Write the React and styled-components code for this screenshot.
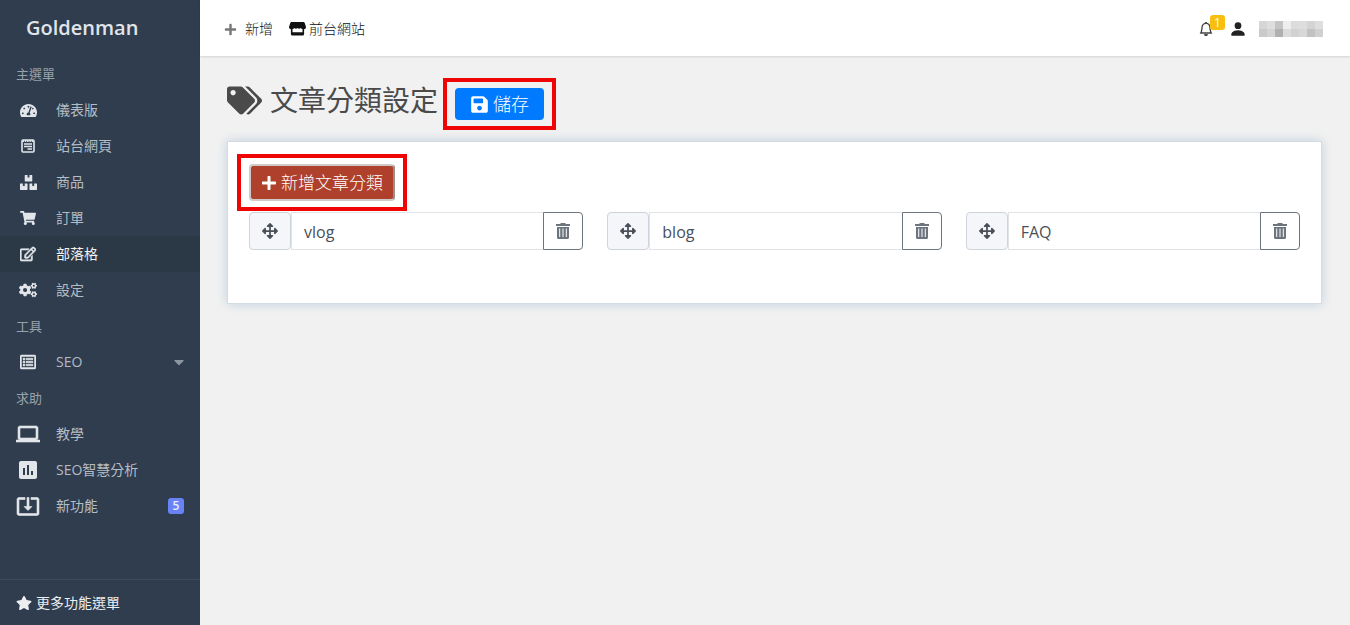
import React, { useState } from 'react';
import styled, { createGlobalStyle } from 'styled-components';
import {
  FaTachometerAlt,
  FaBoxes,
  FaShoppingCart,
  FaRegEdit,
  FaCogs,
  FaRegListAlt,
  FaStar,
  FaTags,
  FaSave,
  FaPlus,
  FaArrowsAlt,
  FaCaretDown,
} from 'react-icons/fa';
import { MdLaptop, MdAssessment, MdSystemUpdateAlt } from 'react-icons/md';
import { BsBell, BsPersonFill } from 'react-icons/bs';

const PageIcon = ({ size }) => (
  <svg width={size} height={size} viewBox='0 0 16 16' fill='none' stroke='currentColor'>
    <rect x='2' y='2' width='12' height='12' rx='1' strokeWidth='1.6' />
    <path d='M2.5 3h11' strokeWidth='2' strokeDasharray='1.5 .8' />
    <path d='M4 6h8M4 8.500h8M7.500 11h4.500' strokeWidth='1.3' />
  </svg>
);

const ShopIcon = () => (
  <svg width='17' height='16' viewBox='0 0 17 16' fill='currentColor'>
    <path d='M3 1h11c1 0 1.500.4 1.800 1.200L17 6c0 1.300-.8 2.200-1.900 2.300V13a1.500 1.500 0 0 1-1.500 1.500H3.400A1.500 1.500 0 0 1 1.900 13V8.300C.8 8.200 0 7.300 0 6l1.200-3.800C1.500 1.400 2 1 3 1zM3.500 8v3.300h10V8c-.8 0-1.400-.3-1.800-.9-.8 1-2.400 1-3.200 0-.8 1-2.400 1-3.200 0-.4.6-1 .9-1.800.9z' />
  </svg>
);

const TrashIcon = () => (
  <svg width='16' height='18' viewBox='0 0 16 18' fill='currentColor'>
    <path d='M1 2h4L6 1h4l1 1h4v2H1z' />
    <path
      fillRule='evenodd'
      d='M2 5h12v10.500a1.500 1.500 0 0 1-1.500 1.500h-9A1.500 1.500 0 0 1 2 15.500zM4.200 6.500v8.500h1V6.500zM7.500 6.500v8.500h1V6.500zM10.800 6.500v8.500h1V6.500z'
    />
  </svg>
);

const menu = [
  {
    title: '主選單',
    items: [
      { label: '儀表版', icon: FaTachometerAlt, size: 17 },
      { label: '站台網頁', icon: PageIcon, size: 16 },
      { label: '商品', icon: FaBoxes, size: 17 },
      { label: '訂單', icon: FaShoppingCart, size: 16 },
      { label: '部落格', icon: FaRegEdit, size: 16, active: true, bold: 20 },
      { label: '設定', icon: FaCogs, size: 18 },
    ],
  },
  {
    title: '工具',
    items: [{ label: 'SEO', icon: FaRegListAlt, size: 16, caret: true, bold: 16 }],
  },
  {
    title: '求助',
    items: [
      { label: '教學', icon: MdLaptop, size: 24, bold: 0.6 },
      { label: 'SEO智慧分析', icon: MdAssessment, size: 24 },
      { label: '新功能', icon: MdSystemUpdateAlt, size: 24, badge: 5, bold: 0.6 },
    ],
  },
];

const maskCells = [
  '#d6d6d6', '#dedede', '#c4c4c4', '#eeeeee', '#dcdcdc', '#dddddd', '#d4d4d4', '#dedede',
  '#cacaca', '#d4d4d4', '#b0b0b0', '#dcdcdc', '#d2d2d2', '#d8d8d8', '#c2c2c2', '#d0d0d0',
];

function Sidebar() {
  return (
    <Aside>
      <Brand href='#'>Goldenman</Brand>
      <Nav>
        {menu.map((group) => (
          <React.Fragment key={group.title}>
            <MenuTitle>{group.title}</MenuTitle>
            {group.items.map(({ label, icon: Icon, size, active, caret, badge, bold }) => (
              <MenuLink href='#' key={label} $active={active}>
                <IconSlot $bold={bold}>
                  <Icon size={size} />
                </IconSlot>
                <span>{label}</span>
                {caret && <Caret size={16} />}
                {badge && <Badge>{badge}</Badge>}
              </MenuLink>
            ))}
          </React.Fragment>
        ))}
      </Nav>
      <MoreLink href='#'>
        <FaStar size={16} />
        更多功能選單
      </MoreLink>
    </Aside>
  );
}

function Topbar() {
  return (
    <Header>
      <TopLinks>
        <TopLink href='#' $gap='8px'>
          <PlusIcon size={13} />
          新增
        </TopLink>
        <TopLink href='#' $gap='3px'>
          <ShopIcon />
          前台網站
        </TopLink>
      </TopLinks>
      <Account>
        <BellButton type='button' aria-label='通知'>
          <BsBell size={14} />
          <BellCount>1</BellCount>
        </BellButton>
        <BsPersonFill size={18} />
        <MaskedName>
          {maskCells.map((color, index) => (
            <MaskCell key={index} $color={color} />
          ))}
        </MaskedName>
      </Account>
    </Header>
  );
}

function App() {
  const [names, setNames] = useState(['vlog', 'blog', 'FAQ']);

  const rename = (index, value) => {
    setNames(names.map((name, i) => (i === index ? value : name)));
  };

  return (
    <Layout>
      <GlobalStyle />
      <Sidebar />
      <Content>
        <Topbar />
        <Main>
          <Heading>
            <Title>
              <FaTags size={35} />
              <h1>文章分類設定</h1>
            </Title>
            <Highlight>
              <SaveButton type='button'>
                <FaSave size={19} />
                儲存
              </SaveButton>
            </Highlight>
          </Heading>
          <Card>
            <Highlight>
              <AddButton type='button' onClick={() => setNames([...names, ''])}>
                <FaPlus size={16} />
                新增文章分類
              </AddButton>
            </Highlight>
            <Categories>
              {names.map((name, index) => (
                <Group key={index}>
                  <Handle>
                    <FaArrowsAlt size={16} />
                  </Handle>
                  <NameInput
                    aria-label='文章分類'
                    value={name}
                    onChange={(e) => rename(index, e.target.value)}
                  />
                  <DeleteButton
                    type='button'
                    aria-label='刪除'
                    onClick={() => setNames(names.filter((_, i) => i !== index))}
                  >
                    <TrashIcon />
                  </DeleteButton>
                </Group>
              ))}
            </Categories>
          </Card>
        </Main>
      </Content>
    </Layout>
  );
}

const GlobalStyle = createGlobalStyle`
  * {
    box-sizing: border-box;
  }
  body {
    margin: 0;
    background: #f1f1f1;
    color: #222;
    font-family: 'Open Sans', 'Noto Sans CJK TC', sans-serif;
    font-size: 14px;
    line-height: 20px;
  }
  a {
    color: inherit;
    text-decoration: none;
  }
  button,
  input {
    font-family: inherit;
  }
  svg {
    flex-shrink: 0;
  }
`;

const Layout = styled.div`
  display: flex;
  min-height: 100vh;
`;

const Aside = styled.aside`
  display: flex;
  flex-direction: column;
  flex: 0 0 200px;
  background: #2f3d4e;
  color: #b4bcc4;
`;

const Brand = styled.a`
  display: flex;
  align-items: center;
  height: 56px;
  padding: 0 26px;
  color: #e1e5ea;
  font-size: 20px;
  font-weight: 600;
`;

const Nav = styled.nav`
  flex: 1;
`;

const MenuTitle = styled.div`
  height: 36px;
  padding: 0 16px;
  color: #98a2ac;
  font-size: 13px;
  line-height: 36px;
`;

const MenuLink = styled.a`
  display: flex;
  align-items: center;
  gap: 16px;
  height: 36px;
  padding: 0 16px;
  background: ${({ $active }) => ($active ? '#2b3947' : 'transparent')};
  color: ${({ $active }) => ($active ? '#f0f2f4' : 'inherit')};
`;

const IconSlot = styled.span`
  display: flex;
  justify-content: center;
  width: 24px;
  color: #e2e6ea;
  svg path {
    stroke-width: ${({ $bold }) => $bold};
  }
  svg path[fill='none'] {
    stroke: none;
  }
`;

const Caret = styled(FaCaretDown)`
  margin: 0 -3px 0 auto;
  color: #8d97a1;
`;

const Badge = styled.span`
  width: 16px;
  height: 16px;
  margin-left: auto;
  border-radius: 3px;
  background: #6783f5;
  color: #e8ecff;
  font-size: 12px;
  font-weight: 600;
  line-height: 16px;
  text-align: center;
`;

const MoreLink = styled.a`
  display: flex;
  align-items: center;
  gap: 4px;
  height: 46px;
  padding: 0 16px;
  border-top: 1px solid #3b4959;
  color: #eceef0;
`;

const Content = styled.div`
  flex: 1;
  min-width: 0;
`;

const Header = styled.header`
  display: flex;
  align-items: center;
  justify-content: space-between;
  height: 56px;
  padding: 2px 27px 0 24px;
  background: #fff;
  box-shadow: 0 1px 2px rgba(0, 0, 0, 0.12);
`;

const TopLinks = styled.div`
  display: flex;
  gap: 16px;
`;

const TopLink = styled.a`
  display: flex;
  align-items: center;
  gap: ${({ $gap }) => $gap};
  color: #111;
  font-weight: 300;
`;

const PlusIcon = styled(FaPlus)`
  color: #777;
`;

const Account = styled.div`
  display: flex;
  align-items: center;
  gap: 12px;
`;

const BellButton = styled.button`
  position: relative;
  display: flex;
  margin-right: 4px;
  padding: 0;
  border: 0;
  background: none;
  color: #222;
  svg {
    stroke: currentColor;
    stroke-width: 0.3;
  }
`;

const BellCount = styled.span`
  position: absolute;
  left: 11px;
  bottom: 6px;
  width: 15px;
  height: 15px;
  border-radius: 3px;
  background: #f9bf10;
  color: #fff;
  font-size: 12px;
  line-height: 15px;
  text-align: center;
`;

const MaskedName = styled.div`
  display: grid;
  grid-template-columns: repeat(8, 8px);
  grid-auto-rows: 8px;
`;

const MaskCell = styled.span`
  background: ${({ $color }) => $color};
`;

const Main = styled.main`
  padding: 22px 28px 28px 27px;
`;

const Heading = styled.div`
  display: flex;
  align-items: flex-start;
  gap: 5px;
  margin-bottom: 11px;
`;

const Title = styled.div`
  display: flex;
  align-items: center;
  gap: 8px;
  color: #4a4a4a;
  h1 {
    margin: 0;
    font-size: 28px;
    font-weight: 400;
    line-height: 44px;
  }
`;

const Highlight = styled.div`
  width: fit-content;
  padding: 6px 8px;
  border: 4px solid #f00505;
`;

const SaveButton = styled.button`
  display: flex;
  align-items: center;
  gap: 4px;
  height: 32px;
  padding: 0 15px;
  border: 0;
  border-radius: 4px;
  background: #007bff;
  color: #fff;
  font-size: 18px;
  font-weight: 300;
  line-height: 24px;
`;

const AddButton = styled.button`
  display: flex;
  align-items: center;
  gap: 4px;
  height: 37px;
  padding: 0 10px;
  border: 2px solid #cfc9c8;
  border-right-color: #9b8f8c;
  border-radius: 4px;
  background: #af402b;
  color: #fff;
  font-size: 17px;
  font-weight: 300;
  line-height: 24px;
`;

const Card = styled.section`
  min-height: 163px;
  padding: 12px 9px 53px;
  border: 1px solid #d3dbe3;
  background: #fff;
  box-shadow: 0 0 10px rgba(120, 160, 200, 0.4);
`;

const Categories = styled.div`
  display: grid;
  grid-template-columns: repeat(3, 1fr);
  gap: 24px;
  padding: 1px 12px 0;
`;

const Group = styled.div`
  display: flex;
  height: 38px;
`;

const Handle = styled.span`
  display: flex;
  align-items: center;
  justify-content: center;
  width: 42px;
  border: 1px solid #ced4da;
  border-radius: 4px;
  background: #f4f6f9;
  color: #495057;
  cursor: move;
`;

const NameInput = styled.input`
  flex: 1;
  min-width: 0;
  padding: 2px 12px 0;
  border: 1px solid #e0e4e7;
  border-right: 0;
  background: #fff;
  color: #495057;
  font-size: 16px;
  outline: 0;
`;

const DeleteButton = styled.button`
  display: flex;
  align-items: center;
  justify-content: center;
  width: 40px;
  padding: 0;
  border: 1px solid #6c757d;
  border-radius: 0 4px 4px 0;
  background: #fff;
  color: #6c757d;
`;

export default App;
